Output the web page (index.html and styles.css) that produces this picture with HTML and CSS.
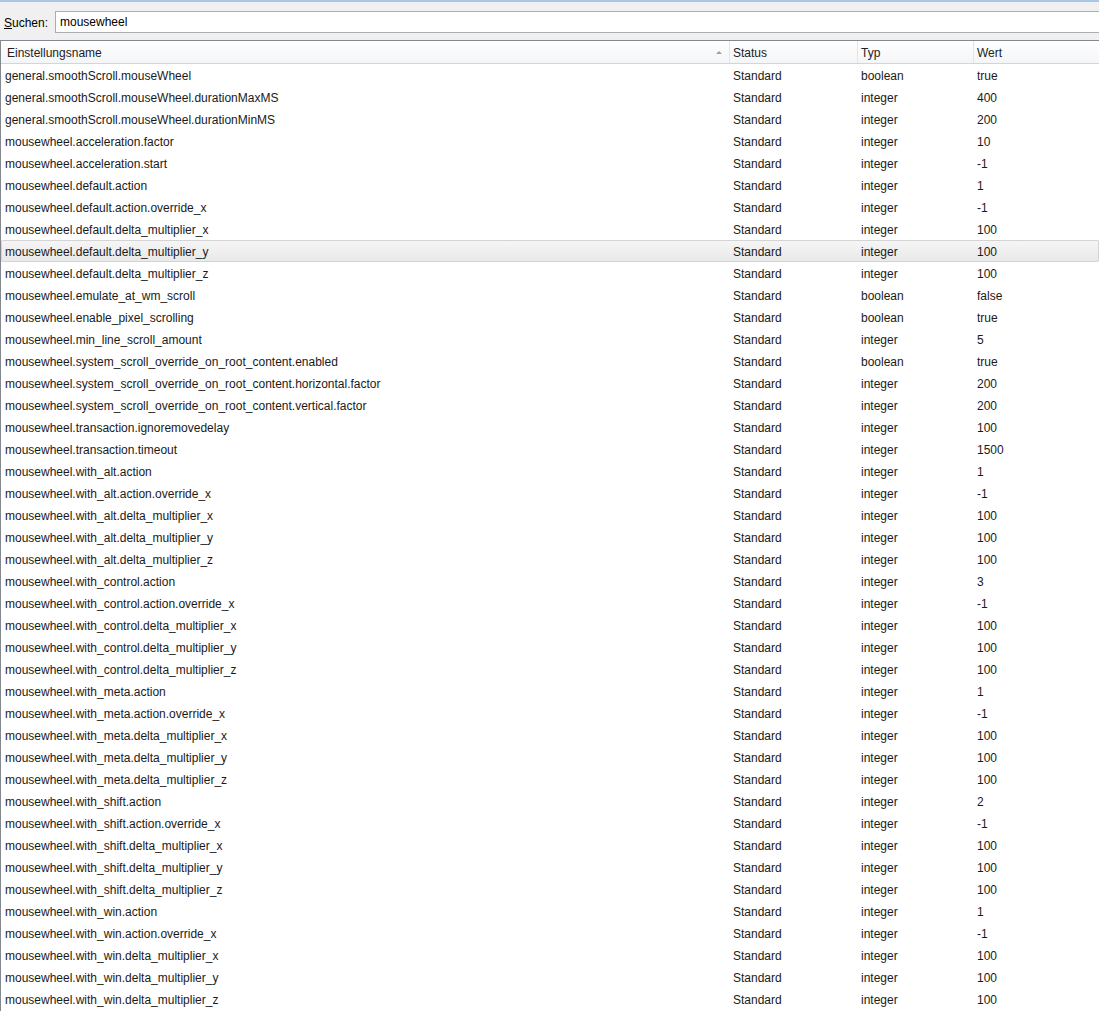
FILE: index.html
```html
<!DOCTYPE html>
<html>
<head>
<meta charset="utf-8">
<link rel="stylesheet" href="styles.css">
</head>
<body>
<div class="topline"></div>
<div class="searchbar">
  <label class="label"><u>S</u>uchen:</label>
  <div class="input">mousewheel</div>
</div>
<div class="tree">
  <div class="row head">
    <div class="cell c1">Einstellungsname<span class="arrow"></span></div>
    <div class="cell c2">Status</div>
    <div class="cell c3">Typ</div>
    <div class="cell c4">Wert</div>
  </div>
  <div class="row"><div class="cell">general.smoothScroll.mouseWheel</div><div class="cell">Standard</div><div class="cell">boolean</div><div class="cell">true</div></div>
  <div class="row"><div class="cell">general.smoothScroll.mouseWheel.durationMaxMS</div><div class="cell">Standard</div><div class="cell">integer</div><div class="cell">400</div></div>
  <div class="row"><div class="cell">general.smoothScroll.mouseWheel.durationMinMS</div><div class="cell">Standard</div><div class="cell">integer</div><div class="cell">200</div></div>
  <div class="row"><div class="cell">mousewheel.acceleration.factor</div><div class="cell">Standard</div><div class="cell">integer</div><div class="cell">10</div></div>
  <div class="row"><div class="cell">mousewheel.acceleration.start</div><div class="cell">Standard</div><div class="cell">integer</div><div class="cell">-1</div></div>
  <div class="row"><div class="cell">mousewheel.default.action</div><div class="cell">Standard</div><div class="cell">integer</div><div class="cell">1</div></div>
  <div class="row"><div class="cell">mousewheel.default.action.override_x</div><div class="cell">Standard</div><div class="cell">integer</div><div class="cell">-1</div></div>
  <div class="row"><div class="cell">mousewheel.default.delta_multiplier_x</div><div class="cell">Standard</div><div class="cell">integer</div><div class="cell">100</div></div>
  <div class="row selected"><div class="cell">mousewheel.default.delta_multiplier_y</div><div class="cell">Standard</div><div class="cell">integer</div><div class="cell">100</div></div>
  <div class="row"><div class="cell">mousewheel.default.delta_multiplier_z</div><div class="cell">Standard</div><div class="cell">integer</div><div class="cell">100</div></div>
  <div class="row"><div class="cell">mousewheel.emulate_at_wm_scroll</div><div class="cell">Standard</div><div class="cell">boolean</div><div class="cell">false</div></div>
  <div class="row"><div class="cell">mousewheel.enable_pixel_scrolling</div><div class="cell">Standard</div><div class="cell">boolean</div><div class="cell">true</div></div>
  <div class="row"><div class="cell">mousewheel.min_line_scroll_amount</div><div class="cell">Standard</div><div class="cell">integer</div><div class="cell">5</div></div>
  <div class="row"><div class="cell">mousewheel.system_scroll_override_on_root_content.enabled</div><div class="cell">Standard</div><div class="cell">boolean</div><div class="cell">true</div></div>
  <div class="row"><div class="cell">mousewheel.system_scroll_override_on_root_content.horizontal.factor</div><div class="cell">Standard</div><div class="cell">integer</div><div class="cell">200</div></div>
  <div class="row"><div class="cell">mousewheel.system_scroll_override_on_root_content.vertical.factor</div><div class="cell">Standard</div><div class="cell">integer</div><div class="cell">200</div></div>
  <div class="row"><div class="cell">mousewheel.transaction.ignoremovedelay</div><div class="cell">Standard</div><div class="cell">integer</div><div class="cell">100</div></div>
  <div class="row"><div class="cell">mousewheel.transaction.timeout</div><div class="cell">Standard</div><div class="cell">integer</div><div class="cell">1500</div></div>
  <div class="row"><div class="cell">mousewheel.with_alt.action</div><div class="cell">Standard</div><div class="cell">integer</div><div class="cell">1</div></div>
  <div class="row"><div class="cell">mousewheel.with_alt.action.override_x</div><div class="cell">Standard</div><div class="cell">integer</div><div class="cell">-1</div></div>
  <div class="row"><div class="cell">mousewheel.with_alt.delta_multiplier_x</div><div class="cell">Standard</div><div class="cell">integer</div><div class="cell">100</div></div>
  <div class="row"><div class="cell">mousewheel.with_alt.delta_multiplier_y</div><div class="cell">Standard</div><div class="cell">integer</div><div class="cell">100</div></div>
  <div class="row"><div class="cell">mousewheel.with_alt.delta_multiplier_z</div><div class="cell">Standard</div><div class="cell">integer</div><div class="cell">100</div></div>
  <div class="row"><div class="cell">mousewheel.with_control.action</div><div class="cell">Standard</div><div class="cell">integer</div><div class="cell">3</div></div>
  <div class="row"><div class="cell">mousewheel.with_control.action.override_x</div><div class="cell">Standard</div><div class="cell">integer</div><div class="cell">-1</div></div>
  <div class="row"><div class="cell">mousewheel.with_control.delta_multiplier_x</div><div class="cell">Standard</div><div class="cell">integer</div><div class="cell">100</div></div>
  <div class="row"><div class="cell">mousewheel.with_control.delta_multiplier_y</div><div class="cell">Standard</div><div class="cell">integer</div><div class="cell">100</div></div>
  <div class="row"><div class="cell">mousewheel.with_control.delta_multiplier_z</div><div class="cell">Standard</div><div class="cell">integer</div><div class="cell">100</div></div>
  <div class="row"><div class="cell">mousewheel.with_meta.action</div><div class="cell">Standard</div><div class="cell">integer</div><div class="cell">1</div></div>
  <div class="row"><div class="cell">mousewheel.with_meta.action.override_x</div><div class="cell">Standard</div><div class="cell">integer</div><div class="cell">-1</div></div>
  <div class="row"><div class="cell">mousewheel.with_meta.delta_multiplier_x</div><div class="cell">Standard</div><div class="cell">integer</div><div class="cell">100</div></div>
  <div class="row"><div class="cell">mousewheel.with_meta.delta_multiplier_y</div><div class="cell">Standard</div><div class="cell">integer</div><div class="cell">100</div></div>
  <div class="row"><div class="cell">mousewheel.with_meta.delta_multiplier_z</div><div class="cell">Standard</div><div class="cell">integer</div><div class="cell">100</div></div>
  <div class="row"><div class="cell">mousewheel.with_shift.action</div><div class="cell">Standard</div><div class="cell">integer</div><div class="cell">2</div></div>
  <div class="row"><div class="cell">mousewheel.with_shift.action.override_x</div><div class="cell">Standard</div><div class="cell">integer</div><div class="cell">-1</div></div>
  <div class="row"><div class="cell">mousewheel.with_shift.delta_multiplier_x</div><div class="cell">Standard</div><div class="cell">integer</div><div class="cell">100</div></div>
  <div class="row"><div class="cell">mousewheel.with_shift.delta_multiplier_y</div><div class="cell">Standard</div><div class="cell">integer</div><div class="cell">100</div></div>
  <div class="row"><div class="cell">mousewheel.with_shift.delta_multiplier_z</div><div class="cell">Standard</div><div class="cell">integer</div><div class="cell">100</div></div>
  <div class="row"><div class="cell">mousewheel.with_win.action</div><div class="cell">Standard</div><div class="cell">integer</div><div class="cell">1</div></div>
  <div class="row"><div class="cell">mousewheel.with_win.action.override_x</div><div class="cell">Standard</div><div class="cell">integer</div><div class="cell">-1</div></div>
  <div class="row"><div class="cell">mousewheel.with_win.delta_multiplier_x</div><div class="cell">Standard</div><div class="cell">integer</div><div class="cell">100</div></div>
  <div class="row"><div class="cell">mousewheel.with_win.delta_multiplier_y</div><div class="cell">Standard</div><div class="cell">integer</div><div class="cell">100</div></div>
  <div class="row"><div class="cell">mousewheel.with_win.delta_multiplier_z</div><div class="cell">Standard</div><div class="cell">integer</div><div class="cell">100</div></div>
</div>
</body>
</html>
```

FILE: styles.css
```css
html, body {
  margin: 0;
  padding: 0;
  background: #f0f0f0;
  font-family: "Liberation Sans", Arial, sans-serif;
  font-size: 12px;
  color: #1a1a1a;
  overflow: hidden;
}

.topline {
  height: 2px;
  background: #a8c7e6;
}

.searchbar {
  display: flex;
  align-items: center;
  height: 38px;
  padding-left: 4px;
  padding-top: 2px;
  box-sizing: border-box;
}

.label {
  width: 51px;
  flex: none;
  font-size: 12px;
  color: #000;
  padding-top: 1px;
}

.input {
  flex: 1;
  height: 22px;
  box-sizing: border-box;
  border: 1px solid #abadb3;
  border-right: none;
  background: #fff;
  padding-left: 4px;
  padding-top: 1px;
  line-height: 19px;
  color: #000;
}

.tree {
  background: #fff;
  border-top: 1px solid #828790;
  border-left: 1px solid #828790;
  height: 1000px;
}

.row {
  display: grid;
  grid-template-columns: 728px 128px 116px 1fr;
  height: 22px;
  align-items: center;
  box-sizing: border-box;
}

.cell {
  padding-left: 4px;
  padding-top: 2px;
  white-space: nowrap;
  overflow: hidden;
}

.head {
  background: linear-gradient(#ffffff, #f4f5f7);
  border-bottom: 1px solid #d5d5d5;
  height: 23px;
}

.head .cell {
  height: 22px;
  line-height: 20px;
  box-sizing: border-box;
  color: #222;
}

.head .c1 {
  position: relative;
  padding-left: 6px;
}

.head .c2, .head .c3, .head .c4 {
  border-left: 1px solid #e3e4e6;
  padding-left: 3px;
}

.arrow {
  position: absolute;
  right: 7px;
  top: 10px;
  width: 0;
  height: 0;
  border-left: 3px solid transparent;
  border-right: 3px solid transparent;
  border-bottom: 3px solid #9aa0a8;
}

.selected {
  background: linear-gradient(#f6f6f6, #e8e8e8);
  box-shadow: inset 0 0 0 1px #d4d4d4;
  border-radius: 2px;
}
```
